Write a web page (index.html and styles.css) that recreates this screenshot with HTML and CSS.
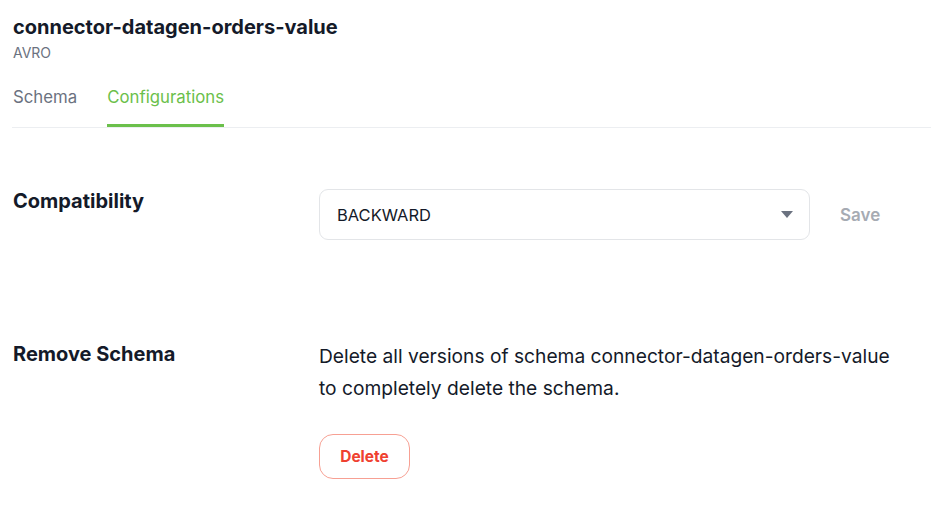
FILE: index.html
```html
<!DOCTYPE html>
<html>
<head>
<meta charset="utf-8">
<link rel="stylesheet" href="styles.css">
</head>
<body>
<div class="page">
  <header class="header">
    <h1 class="title">connector-datagen-orders-value</h1>
    <div class="type">AVRO</div>
  </header>
  <nav class="tabs">
    <div class="tab">Schema</div>
    <div class="tab active">Configurations</div>
  </nav>
  <section class="row compat">
    <div class="label">Compatibility</div>
    <div class="control">
      <div class="select">
        <span>BACKWARD</span>
        <svg class="caret" width="12" height="7" viewBox="0 0 12 7"><path d="M0 0h12L6 7z" fill="#6b7280"/></svg>
      </div>
      <button class="save">Save</button>
    </div>
  </section>
  <section class="row remove">
    <div class="label">Remove Schema</div>
    <div class="content">
      <p class="desc">Delete all versions of schema connector-datagen-orders-value to completely delete the schema.</p>
      <button class="delete">Delete</button>
    </div>
  </section>
</div>
</body>
</html>
```

FILE: styles.css
```css
* { box-sizing: border-box; }
body {
  margin: 0;
  background: #fff;
  font-family: Inter, "Noto Sans", sans-serif;
  color: #111827;
}
.page {
  padding: 14px 0 0 13px;
}
.title {
  margin: 0;
  font-size: 20px;
  font-weight: 700;
  line-height: 26px;
  color: #141a29;
}
.type {
  margin-top: 4px;
  font-size: 14px;
  line-height: 18px;
  color: #6b7280;
}
.tabs {
  display: flex;
  gap: 30px;
  margin-top: 24px;
  border-bottom: 1px solid #eceef1;
  margin-left: -1px;
  padding-left: 0;
}
.tab {
  font-size: 16.8px;
  line-height: 20px;
  padding-top: 1px;
  padding-bottom: 17px;
  color: #6b7280;
  border-bottom: 3px solid transparent;
}
.tab:first-child { margin-left: 1px; }
.tab.active {
  color: #6bc04b;
  border-bottom-color: #6bc04b;
}
.row {
  display: grid;
  grid-template-columns: 306px 1fr;
  align-items: start;
}
.compat { margin-top: 61px; }
.remove { margin-top: 100px; }
.label {
  font-size: 20px;
  font-weight: 700;
  line-height: 24px;
  color: #141a29;
}
.remove .label { padding-top: 2px; }
.control {
  display: flex;
  align-items: center;
}
.select {
  width: 491px;
  height: 51px;
  border: 1px solid #e3e5e8;
  border-radius: 9px;
  display: flex;
  align-items: center;
  justify-content: space-between;
  padding: 0 16px 0 17px;
  font-size: 16.5px;
  color: #141a29;
}
.caret { display: block; }
.save {
  margin-left: 30px;
  background: none;
  border: none;
  padding: 0;
  font-family: inherit;
  font-size: 17px;
  font-weight: 600;
  color: #a6abb3;
}
.desc {
  margin: 0;
  font-size: 19.2px;
  line-height: 32px;
  color: #141a29;
  max-width: 590px;
}
.delete {
  margin-top: 30px;
  width: 91px;
  height: 45px;
  border: 1px solid #f7a093;
  border-radius: 14px;
  background: #fff;
  font-family: inherit;
  font-size: 15.5px;
  font-weight: 700;
  color: #ef4130;
}
```
